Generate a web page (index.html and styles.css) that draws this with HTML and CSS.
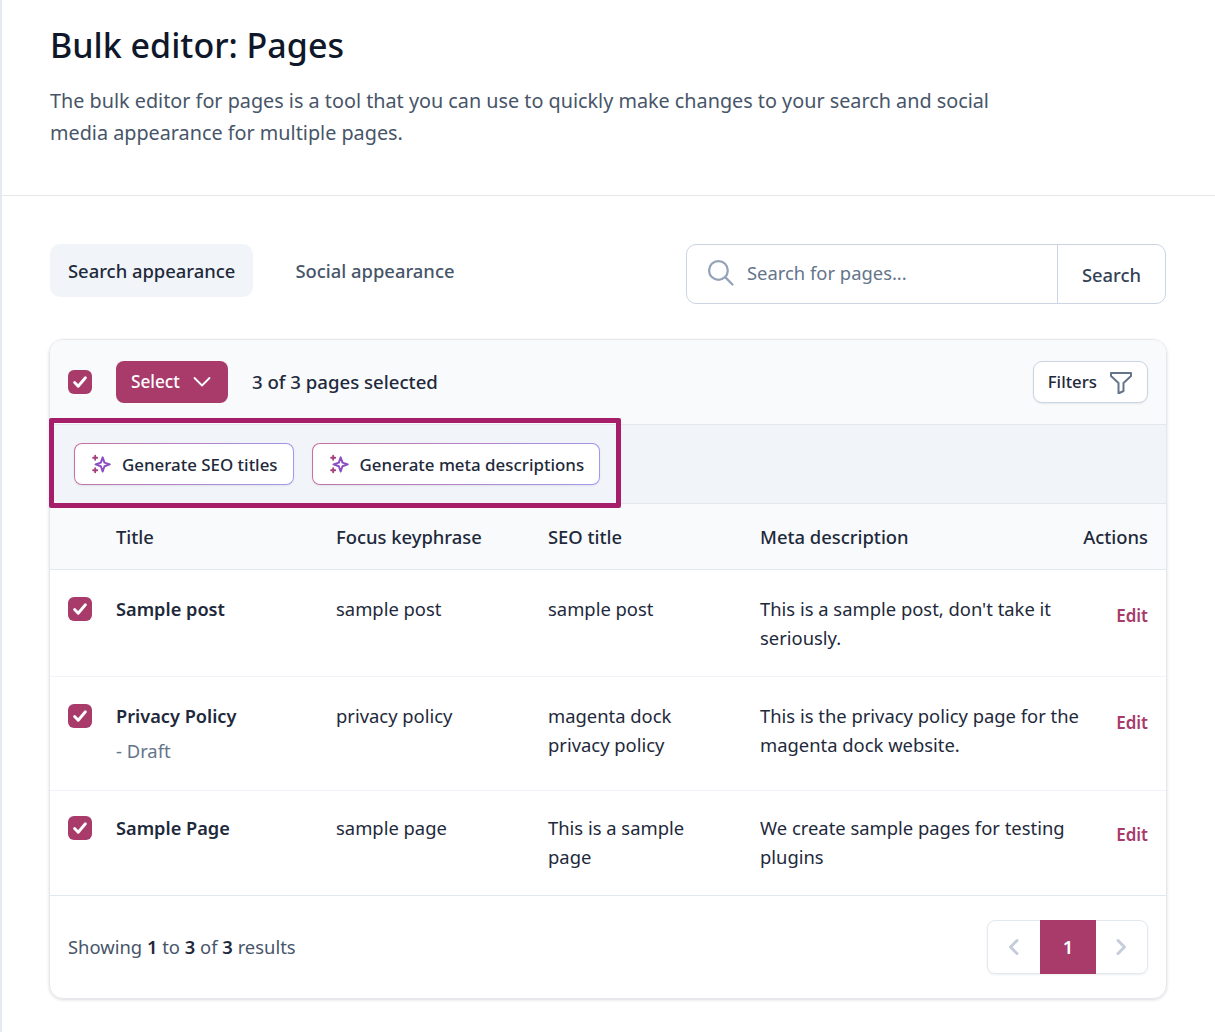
FILE: index.html
```html
<!DOCTYPE html>
<html>
<head>
<title>Bulk editor: Pages</title>
<link rel="stylesheet" href="styles.css">
</head>
<body>
<div class="page">
  <div class="head">
    <h1>Bulk editor: Pages</h1>
    <p>The bulk editor for pages is a tool that you can use to quickly make changes to your search and social media appearance for multiple pages.</p>
  </div>
  <div class="content">
    <div class="toolbar">
      <div class="tabs">
        <a class="tab tab-active">Search appearance</a>
        <a class="tab">Social appearance</a>
      </div>
      <div class="search">
        <div class="search-field">
          <svg class="search-icon" viewBox="0 0 26 26" fill="none" stroke="currentColor" stroke-width="2.200" stroke-linecap="round"><circle cx="11" cy="11" r="9"/><path d="M17.500 17.500l7 7"/></svg>
          <span>Search for pages...</span>
        </div>
        <div class="search-btn">Search</div>
      </div>
    </div>
    <div class="card">
      <div class="card-top">
        <span class="check"><svg viewBox="0 0 20 20"><path d="M5.500 10.500l3 3 6-7" fill="none" stroke="#fff" stroke-width="2.400" stroke-linecap="round" stroke-linejoin="round"/></svg></span>
        <div class="select-btn">Select
          <svg viewBox="0 0 20 20" fill="none" stroke="#fff" stroke-width="1.800" stroke-linecap="round" stroke-linejoin="round"><path d="M2.500 6l7.500 7.500L17.500 6"/></svg>
        </div>
        <span class="selected">3 of 3 pages selected</span>
        <div class="filters">Filters
          <svg viewBox="0 0 24 24" fill="none" stroke="#64748b" stroke-width="2" stroke-linejoin="round"><path d="M2 3h20v3l-7.500 7v8l-5 2.500V13L2 6z"/></svg>
        </div>
      </div>
      <div class="ai-bar">
        <div class="ai-btn">
          <svg viewBox="0 0 24 24"><use href="#sparkle"/></svg>
          <span>Generate SEO titles</span>
        </div>
        <div class="ai-btn">
          <svg viewBox="0 0 24 24"><use href="#sparkle"/></svg>
          <span>Generate meta descriptions</span>
        </div>
      </div>
      <div class="row row-head">
        <div></div>
        <div>Title</div>
        <div>Focus keyphrase</div>
        <div>SEO title</div>
        <div>Meta description</div>
        <div class="actions">Actions</div>
      </div>
      <div class="row row-one">
        <div><span class="check check-row"><svg viewBox="0 0 20 20"><path d="M5.500 10.500l3 3 6-7" fill="none" stroke="#fff" stroke-width="2.400" stroke-linecap="round" stroke-linejoin="round"/></svg></span></div>
        <div class="name">Sample post</div>
        <div>sample post</div>
        <div>sample post</div>
        <div>This is a sample post, don't take it seriously.</div>
        <div class="actions"><a class="edit">Edit</a></div>
      </div>
      <div class="row row-two">
        <div><span class="check check-row"><svg viewBox="0 0 20 20"><path d="M5.500 10.500l3 3 6-7" fill="none" stroke="#fff" stroke-width="2.400" stroke-linecap="round" stroke-linejoin="round"/></svg></span></div>
        <div><div class="name">Privacy Policy</div><div class="draft">- Draft</div></div>
        <div>privacy policy</div>
        <div>magenta dock privacy policy</div>
        <div>This is the privacy policy page for the magenta dock website.</div>
        <div class="actions"><a class="edit">Edit</a></div>
      </div>
      <div class="row row-three">
        <div><span class="check check-row"><svg viewBox="0 0 20 20"><path d="M5.500 10.500l3 3 6-7" fill="none" stroke="#fff" stroke-width="2.400" stroke-linecap="round" stroke-linejoin="round"/></svg></span></div>
        <div class="name">Sample Page</div>
        <div>sample page</div>
        <div>This is a sample page</div>
        <div>We create sample pages for testing plugins</div>
        <div class="actions"><a class="edit">Edit</a></div>
      </div>
      <div class="card-foot">
        <div class="results">Showing <b>1</b> to <b>3</b> of <b>3</b> results</div>
        <div class="pager">
          <span class="pager-arrow"><svg viewBox="0 0 20 20" fill="none" stroke="#c5cdda" stroke-width="3" stroke-linecap="round" stroke-linejoin="round"><path d="M13 3.500L6.500 10l6.500 6.500"/></svg></span>
          <span class="pager-current">1</span>
          <span class="pager-arrow pager-next"><svg viewBox="0 0 20 20" fill="none" stroke="#c5cdda" stroke-width="3" stroke-linecap="round" stroke-linejoin="round"><path d="M6 3.500l6.500 6.500L6 16.500"/></svg></span>
        </div>
      </div>
    </div>
  </div>
  <div class="highlight"></div>
</div>
<svg class="defs" width="0" height="0">
  <defs>
    <g id="sparkle">
      <path d="M14 4l2.200 6.300 6.300 2.200-6.300 2.200L14 21l-2.200-6.300-6.300-2.200 6.300-2.200z" fill="none" stroke="#8a4fc4" stroke-width="2.400" stroke-linejoin="round"/>
      <path d="M5 2v5M2.500 4.500h5M5 17v5M2.500 19.500h5" stroke="#a4417c" stroke-width="2.200" stroke-linecap="round"/>
    </g>
  </defs>
</svg>
</body>
</html>
```

FILE: styles.css
```css
/* Bulk editor page */

html, body
{ margin: 0;
padding: 0;
background: #fff;
}

body
{ font-family: "Noto Sans", sans-serif;
font-size: 18.4px;
line-height: 29px;
color: #1e293b;
}

.page
{ position: relative;
height: 1032px;
overflow: hidden;
border-left: 2px solid #e5e9f0;
box-sizing: border-box;
}

.defs
{ position: absolute;
}

.head
{ height: 196px;
box-sizing: border-box;
padding: 24px 48px 0;
border-bottom: 1px solid #e5e7eb;
}

h1
{ margin: 0;
font-size: 34px;
line-height: 42px;
font-weight: 500;
color: #0f172a;
}

.head p
{ margin: 19px 0 0;
width: 960px;
font-size: 19.800px;
line-height: 32px;
color: #475569;
}

.content
{ padding: 48px 48px 0;
}

.toolbar
{ display: flex;
justify-content: space-between;
align-items: flex-start;
margin-right: 1px;
}

.tabs
{ display: flex;
gap: 24px;
}

.tab
{ padding: 0 18px;
height: 53px;
line-height: 54px;
border-radius: 10px;
font-weight: 500;
color: #475569;
}

.tab-active
{ background: #f1f5f9;
color: #1e293b;
}

.search
{ display: flex;
width: 480px;
height: 60px;
box-sizing: border-box;
border: 1px solid #cbd5e1;
border-radius: 10px;
}

.search-field
{ flex: 1;
display: flex;
align-items: center;
gap: 13px;
padding: 0 20px 3px;
color: #64748b;
}

.search-icon
{ width: 27px;
height: 27px;
color: #94a3b8;
}

.search-btn
{ width: 107px;
border-left: 1px solid #cbd5e1;
text-align: center;
line-height: 60px;
font-weight: 500;
color: #334155;
}

.card
{ margin: 35px 0 0 -1px;
border: 1px solid #e5e7eb;
border-radius: 14px;
box-shadow: 0 1px 3px rgba(15, 23, 42, 0.15);
overflow: hidden;
}

.card-top
{ display: flex;
align-items: center;
height: 84px;
padding: 0 18px;
background: #f8fafc;
}

.check
{ display: block;
width: 24px;
height: 24px;
border-radius: 6px;
background: #a83b6a;
}

.check-row
{ margin-top: 3px;
}

.check svg
{ display: block;
width: 24px;
height: 24px;
}

.select-btn
{ display: flex;
align-items: center;
gap: 12px;
width: 112px;
height: 42px;
box-sizing: border-box;
margin-left: 24px;
padding: 0 0 2px 15px;
border-radius: 8px;
background: #a83b6a;
color: #fff;
font-size: 17.200px;
font-weight: 500;
}

.select-btn svg
{ width: 20px;
height: 20px;
margin-top: 2px;
}

.selected
{ margin: 0 0 2px 24px;
font-size: 18.600px;
font-weight: 500;
}

.filters
{ display: flex;
align-items: center;
gap: 12px;
height: 42px;
box-sizing: border-box;
margin-left: auto;
padding: 0 14px 2px;
background: #fff;
border: 1px solid #cbd5e1;
border-radius: 9px;
box-shadow: 0 1px 2px rgba(15, 23, 42, 0.08);
font-size: 16.800px;
font-weight: 500;
}

.filters svg
{ width: 24px;
height: 24px;
margin-top: 2px;
}

.ai-bar
{ display: flex;
gap: 18px;
height: 80px;
padding: 18px 24px 0;
box-sizing: border-box;
background: #f1f5f9;
border-top: 1px solid #e2e8f0;
border-bottom: 1px solid #e2e8f0;
}

.ai-btn
{ display: flex;
align-items: center;
gap: 10px;
height: 42px;
box-sizing: border-box;
padding: 0 15px 0 16px;
background: linear-gradient(#fff, #fff) padding-box, linear-gradient(120deg, #c76f9f, #a09af0) border-box;
border: 1px solid transparent;
border-radius: 8px;
box-shadow: 0 1px 2px rgba(15, 23, 42, 0.08);
font-size: 16.900px;
font-weight: 500;
}

.ai-btn svg
{ width: 20px;
height: 20px;
margin-right: 1px;
}

.row
{ display: grid;
grid-template-columns: 48px 220px 212px 212px 1fr 66px;
padding: 0 18px;
border-bottom: 1px solid #f1f3f9;
}

.row-head
{ height: 66px;
box-sizing: border-box;
align-items: center;
background: #f8fafc;
font-weight: 500;
border-bottom-color: #e2e8f0;
}

.row-one { height: 107px; padding-top: 24px; box-sizing: border-box; }
.row-two { height: 114px; padding-top: 24px; box-sizing: border-box; }
.row-three { height: 105px; padding-top: 22px; box-sizing: border-box; border-bottom-color: #e2e8f0; }

.name
{ padding-top: 1px;
font-size: 18.200px;
font-weight: 600;
}

.draft
{ margin-top: 5px;
color: #64748b;
}

.row > div:nth-child(4)
{ padding-right: 40px;
}

.actions
{ text-align: right;
}

.edit
{ display: block;
margin-top: 7px;
color: #a83b6a;
font-size: 17px;
font-weight: 600;
}

.card-foot
{ display: flex;
justify-content: space-between;
align-items: center;
height: 102px;
padding: 0 18px;
}

.results
{ margin-bottom: 2px;
color: #475569;
}

.results b
{ font-weight: 600;
color: #1e293b;
}

.pager
{ display: flex;
height: 54px;
box-sizing: border-box;
border: 1px solid #e2e8f0;
border-radius: 8px;
box-shadow: 0 1px 2px rgba(15, 23, 42, 0.08);
}

.pager-arrow
{ display: flex;
align-items: center;
justify-content: center;
width: 52px;
}

.pager-next
{ width: 51px;
}

.pager-arrow svg
{ width: 20px;
height: 20px;
}

.pager-current
{ width: 56px;
margin: -1px 0;
background: #a83b6a;
color: #fff;
text-align: center;
line-height: 54px;
font-weight: 600;
}

/* annotation drawn over the screenshot */
.highlight
{ position: absolute;
left: 47px;
top: 418px;
width: 562px;
height: 80px;
border: 5px solid #a61e69;
border-radius: 2px;
}
```
